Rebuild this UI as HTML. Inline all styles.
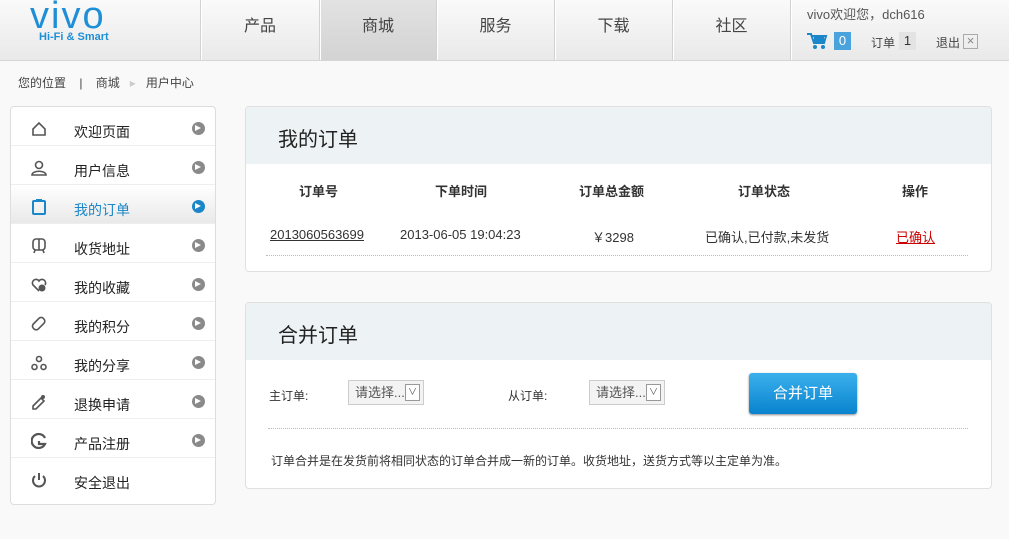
<!DOCTYPE html>
<html><head><meta charset="utf-8"><style>
*{margin:0;padding:0;box-sizing:border-box}
body{width:1009px;height:539px;background:#f9f9f9;font-family:"Liberation Sans","Noto Sans CJK SC",sans-serif;font-size:13px;color:#333;position:relative;overflow:hidden}
.hd{position:absolute;left:0;top:0;width:1009px;height:61px;background:linear-gradient(#fafafa,#e9e9e9);border-bottom:1px solid #d6d6d6}
.nav{position:absolute;top:0;height:60px;border-left:1px solid #d2d2d2;box-shadow:inset 1px 0 #fff;text-align:center;line-height:54px;font-size:16px;color:#444}
.nav.on{background:linear-gradient(#e2e2e2,#d3d3d3)}
.abs{position:absolute}
.side{position:absolute;left:10px;top:106px;width:206px;height:399px;background:#fff;border:1px solid #ddd;border-radius:4px}
.it{position:absolute;left:0;width:204px;height:39px;border-bottom:1px solid #eee}
.it .t{position:absolute;left:63px;top:15px;font-size:14px;color:#222}
.it .a{position:absolute;left:181px;top:15px;width:13px;height:13px;border-radius:50%;background:#8a8a8a}
.it .a:after{content:"";position:absolute;left:3px;top:3px;border-left:6px solid #fff;border-top:3.5px solid transparent;border-bottom:3.5px solid transparent}
.it svg{position:absolute;left:20px;top:14px}
.it.on{background:linear-gradient(#fff,#e9e9e9)}
.it.on .t{color:#1b86c8}.it.on .a{background:#1b86c8}
.pn{position:absolute;left:245px;width:747px;background:#fff;border:1px solid #e0e0e0;border-radius:4px;overflow:hidden}
.ph{height:57px;background:#edf2f5;font-size:20px;color:#222;padding:16px 0 0 32px}
.th{position:absolute;top:74px;font-size:13px;color:#333;font-weight:bold}
.sel{position:absolute;width:76px;height:25px;border:1px solid #ccc;background:#f3f3f3;font-size:13px;color:#555;line-height:23px;padding-left:6px}
.sel i{position:absolute;right:3px;top:3px;width:15px;height:17px;border:1px solid #999;background:#fff;font-style:normal;font-size:9px;line-height:15px;text-align:center}
</style></head><body>
<div class="hd">
 <div class="abs" style="left:30px;top:-3px;height:38px;line-height:38px;color:#1e8fd6;font-size:38px;letter-spacing:2px;font-family:'Liberation Sans',sans-serif">vivo</div>
 <div class="abs" style="left:39px;top:31px;color:#1e8fd6;font-size:11px;font-weight:bold">Hi-Fi &amp; Smart</div>
 <div class="nav" style="left:200px;width:119px">产品</div>
 <div class="nav on" style="left:319px;width:117px">商城</div>
 <div class="nav" style="left:436px;width:118px">服务</div>
 <div class="nav" style="left:554px;width:118px">下载</div>
 <div class="nav" style="left:672px;width:118px">社区</div>
 <div class="nav" style="left:790px;width:219px"></div>
 <div class="abs" style="left:807px;top:4px;font-size:13px;color:#555">vivo欢迎您，dch616</div>
 <svg class="abs" style="left:806px;top:32px" width="22" height="18"><path d="M1 2h4l3 9h10l2-7H6" fill="none" stroke="#1b86c8" stroke-width="2"/><rect x="8" y="5" width="10" height="5" fill="#1b86c8"/><circle cx="9" cy="15" r="2" fill="#1b86c8"/><circle cx="17" cy="15" r="2" fill="#1b86c8"/></svg>
 <div class="abs" style="left:834px;top:32px;width:17px;height:18px;background:#4aa3dd;color:#fff;text-align:center;font-size:13px;line-height:18px">0</div>
 <div class="abs" style="left:871px;top:34px;font-size:12px;color:#444">订单</div>
 <div class="abs" style="left:899px;top:32px;width:17px;height:18px;background:#e3e3e3;color:#333;text-align:center;font-size:13px;line-height:18px">1</div>
 <div class="abs" style="left:936px;top:34px;font-size:12px;color:#444">退出</div>
 <div class="abs" style="left:963px;top:34px;width:15px;height:15px;border:1px solid #aaa;color:#888;font-size:13px;line-height:12px;text-align:center">×</div>
</div>
<div class="abs" style="left:18px;top:74px;font-size:12px;color:#444">您的位置 &nbsp;&nbsp;&nbsp;| &nbsp;&nbsp;&nbsp;商城 &nbsp;&nbsp;<span style="color:#ccc">▸</span>&nbsp;&nbsp; 用户中心</div>
<div class="side">
 <div class="it" style="top:0"><svg width="16" height="16"><path d="M2 8L8 2l6 6v6H2z" fill="none" stroke="#555" stroke-width="1.6"/></svg><span class="t">欢迎页面</span><span class="a"></span></div>
 <div class="it" style="top:39px"><svg width="16" height="16"><circle cx="8" cy="5" r="3.5" fill="none" stroke="#555" stroke-width="1.6"/><path d="M1 15c0-5 14-5 14 0z" fill="none" stroke="#555" stroke-width="1.6"/></svg><span class="t">用户信息</span><span class="a"></span></div>
 <div class="it on" style="top:78px"><svg width="16" height="16"><rect x="2" y="2" width="12" height="13" rx="1" fill="none" stroke="#1b86c8" stroke-width="2"/><rect x="5" y="0" width="6" height="3" fill="#1b86c8"/></svg><span class="t">我的订单</span><span class="a"></span></div>
 <div class="it" style="top:117px"><svg width="16" height="16"><rect x="2" y="1" width="12" height="11" rx="3" fill="none" stroke="#555" stroke-width="1.6"/><path d="M8 1v11M4 12l-1 3M12 12l1 3" stroke="#555" stroke-width="1.6"/></svg><span class="t">收货地址</span><span class="a"></span></div>
 <div class="it" style="top:156px"><svg width="16" height="16"><path d="M8 14L2 8a3 3 0 0 1 6-4 3 3 0 0 1 6 4" fill="none" stroke="#555" stroke-width="1.6"/><circle cx="11" cy="11" r="3.5" fill="#555"/></svg><span class="t">我的收藏</span><span class="a"></span></div>
 <div class="it" style="top:195px"><svg width="16" height="16"><rect x="4" y="1" width="7" height="14" rx="3" transform="rotate(45 8 8)" fill="none" stroke="#555" stroke-width="1.6"/></svg><span class="t">我的积分</span><span class="a"></span></div>
 <div class="it" style="top:234px"><svg width="16" height="16"><circle cx="8" cy="4" r="2.5" fill="none" stroke="#555" stroke-width="1.6"/><circle cx="3.5" cy="12" r="2.5" fill="none" stroke="#555" stroke-width="1.6"/><circle cx="12.5" cy="12" r="2.5" fill="none" stroke="#555" stroke-width="1.6"/></svg><span class="t">我的分享</span><span class="a"></span></div>
 <div class="it" style="top:273px"><svg width="16" height="16"><path d="M2 12l8-8 3 3-8 8H2z" fill="none" stroke="#555" stroke-width="1.6"/><circle cx="12" cy="3" r="2" fill="#555"/></svg><span class="t">退换申请</span><span class="a"></span></div>
 <div class="it" style="top:312px"><svg width="16" height="16"><path d="M14 5A7 7 0 1 0 14 11H8V8" fill="none" stroke="#555" stroke-width="2.2"/></svg><span class="t">产品注册</span><span class="a"></span></div>
 <div class="it" style="top:351px;border:0"><svg width="16" height="16"><path d="M4 4a6 6 0 1 0 8 0" fill="none" stroke="#555" stroke-width="2"/><path d="M8 1v7" stroke="#555" stroke-width="2"/></svg><span class="t">安全退出</span></div>
</div>
<div class="pn" style="top:106px;height:166px">
 <div class="ph">我的订单</div>
 <div class="th" style="left:53px">订单号</div>
 <div class="th" style="left:189px">下单时间</div>
 <div class="th" style="left:333px">订单总金额</div>
 <div class="th" style="left:492px">订单状态</div>
 <div class="th" style="left:656px">操作</div>
 <div class="abs" style="left:24px;top:120px;text-decoration:underline;color:#333">2013060563699</div>
 <div class="abs" style="left:154px;top:120px">2013-06-05 19:04:23</div>
 <div class="abs" style="left:346px;top:120px">￥3298</div>
 <div class="abs" style="left:459px;top:120px">已确认,已付款,未发货</div>
 <div class="abs" style="left:650px;top:120px;color:#c00;text-decoration:underline">已确认</div>
 <div class="abs" style="left:20px;top:148px;width:702px;border-top:1px dotted #bbb"></div>
</div>
<div class="pn" style="top:302px;height:187px">
 <div class="ph">合并订单</div>
 <div class="abs" style="left:23px;top:84px;font-size:12px">主订单:</div>
 <div class="sel" style="left:102px;top:77px">请选择...<i>∨</i></div>
 <div class="abs" style="left:262px;top:84px;font-size:12px">从订单:</div>
 <div class="sel" style="left:343px;top:77px">请选择...<i>∨</i></div>
 <div class="abs" style="left:503px;top:70px;width:108px;height:41px;background:linear-gradient(#3ab0ec,#0a83cf);border-radius:3px;color:#fff;font-size:15px;text-align:center;line-height:41px;box-shadow:0 1px 2px #888">合并订单</div>
 <div class="abs" style="left:22px;top:125px;width:700px;border-top:1px dotted #bbb"></div>
 <div class="abs" style="left:25px;top:149px;font-size:12px">订单合并是在发货前将相同状态的订单合并成一新的订单。收货地址，送货方式等以主定单为准。</div>
</div>
</body></html>
